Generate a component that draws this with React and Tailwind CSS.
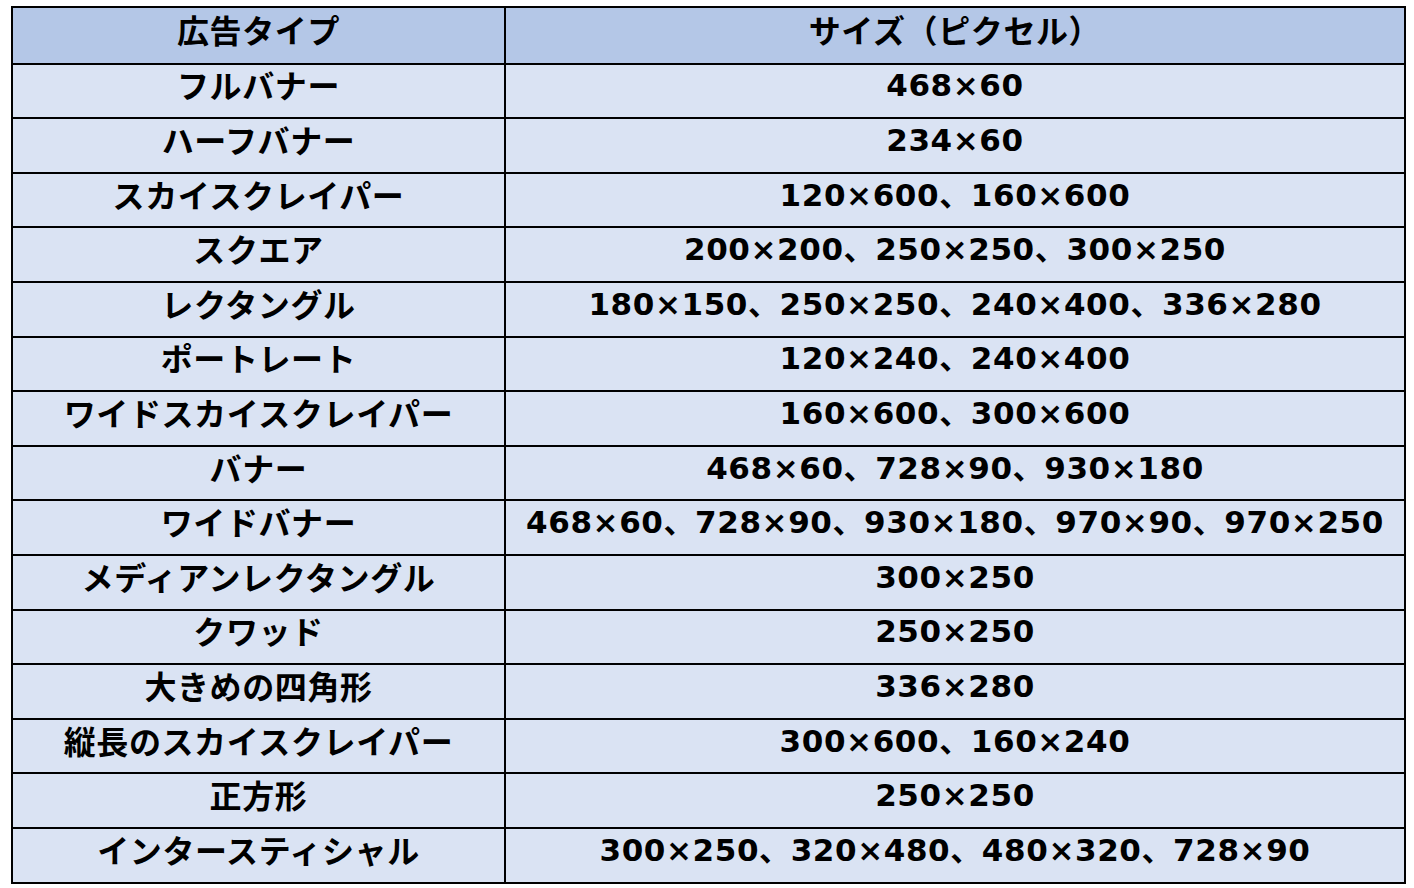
const ROWS = [
  ["フルバナー", "468×60"],
  ["ハーフバナー", "234×60"],
  ["スカイスクレイパー", "120×600、160×600"],
  ["スクエア", "200×200、250×250、300×250"],
  ["レクタングル", "180×150、250×250、240×400、336×280"],
  ["ポートレート", "120×240、240×400"],
  ["ワイドスカイスクレイパー", "160×600、300×600"],
  ["バナー", "468×60、728×90、930×180"],
  ["ワイドバナー", "468×60、728×90、930×180、970×90、970×250"],
  ["メディアンレクタングル", "300×250"],
  ["クワッド", "250×250"],
  ["大きめの四角形", "336×280"],
  ["縦長のスカイスクレイパー", "300×600、160×240"],
  ["正方形", "250×250"],
  ["インタースティシャル", "300×250、320×480、480×320、728×90"],
];

const CJK = '"Noto Sans CJK JP", "Noto Sans", sans-serif';
const NUM = '"DejaVu Sans", "Noto Sans CJK JP", sans-serif';

function Row({ left, right, head, first }) {
  return (
    <div
      className={`flex h-[54.6px] ${head ? "bg-[#b4c7e7]" : "bg-[#dae3f3]"} ${first ? "" : "border-t-2 border-black"}`}
    >
      <div className="flex w-[493px] shrink-0 items-center justify-center border-r-2 border-black pb-[13px] tracking-[0.6px]">
        {left}
      </div>
      {head ? (
        <div className="flex flex-1 items-center justify-center pb-[13px] tracking-[0.6px]">{right}</div>
      ) : (
        <div
          className="flex flex-1 items-center justify-center pb-[10px] text-[31px] tracking-[0.6px]"
          style={{ fontFamily: NUM }}
        >
          {right}
        </div>
      )}
    </div>
  );
}

export default function App() {
  return (
    <div className="min-h-[888px] bg-white pl-[11px] pt-[6px]">
      <div
        className="w-[1395px] border-2 border-black text-[32px] font-bold leading-none text-black"
        style={{ fontFamily: CJK }}
      >
        <Row left="広告タイプ" right="サイズ（ピクセル）" head first />
        {ROWS.map(([l, r]) => (
          <Row key={l} left={l} right={r} />
        ))}
      </div>
    </div>
  );
}
